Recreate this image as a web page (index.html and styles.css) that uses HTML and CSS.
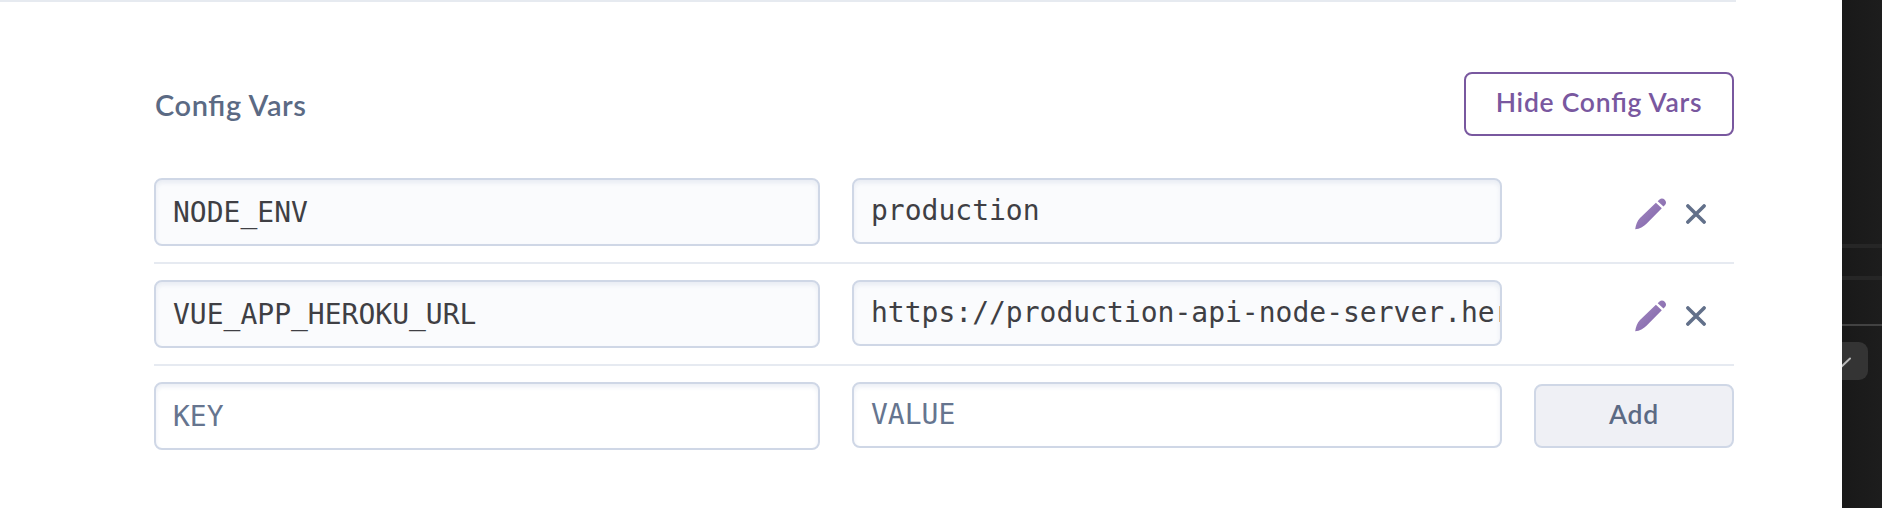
FILE: index.html
```html
<!DOCTYPE html>
<html lang="en">
<head>
<meta charset="utf-8">
<title>Config Vars</title>
<link rel="stylesheet" href="styles.css">
</head>
<body>
<svg class="defs" width="0" height="0" aria-hidden="true">
  <defs>
    <linearGradient id="violet" x1="0" y1="0" x2="1" y2="1">
      <stop offset="0" stop-color="#a78bc4"/>
      <stop offset="0.5" stop-color="#9176b5"/>
      <stop offset="1" stop-color="#7f5fa8"/>
    </linearGradient>
    <symbol id="pencil" viewBox="0 0 32 32">
      <path fill="url(#violet)" d="M0.2 31.2C0.8 26.6 2.3 22.8 5 20L20.9 4.7L26.8 10.2L11.5 25.7C8.4 28.8 4.8 30.8 0.2 31.2ZM22.7 3.2L24.5 1.4C26.2 0 28.3 0.3 29.7 1.8C31.2 3.3 31.5 5 30.2 6.7L28.5 8.5Z"/>
    </symbol>
    <symbol id="cross" viewBox="0 0 20 20">
      <path fill="none" stroke="#62708a" stroke-width="3.6" stroke-linecap="round" d="M1.9 1.9L18.1 18.1M18.1 1.9L1.9 18.1"/>
    </symbol>
  </defs>
</svg>
<div class="screen">
  <main class="page">
    <hr class="section-rule">
    <section class="config">
      <header class="config-header">
        <h2 class="title">Config Vars</h2>
        <button class="button button-outline">Hide Config Vars</button>
      </header>
      <div class="row">
        <div class="field key">NODE_ENV</div>
        <div class="field value">production</div>
        <div class="actions">
          <svg class="pencil"><use href="#pencil"/></svg>
          <svg class="cross"><use href="#cross"/></svg>
        </div>
      </div>
      <div class="row">
        <div class="field key">VUE_APP_HEROKU_URL</div>
        <div class="field value">https://production-api-node-server.her</div>
        <div class="actions">
          <svg class="pencil"><use href="#pencil"/></svg>
          <svg class="cross"><use href="#cross"/></svg>
        </div>
      </div>
      <div class="row row-new">
        <div class="field key empty">KEY</div>
        <div class="field value empty">VALUE</div>
        <button class="button button-add">Add</button>
      </div>
    </section>
  </main>
  <aside class="backdrop">
    <div class="band band-first"></div>
    <div class="band band-second"></div>
    <div class="band band-line"></div>
    <div class="chip">
      <svg class="check" viewBox="0 0 10 12"><path fill="none" stroke="#b9b9b9" stroke-width="2" stroke-linecap="round" d="M-2 11L8 1.5"/></svg>
    </div>
  </aside>
</div>
</body>
</html>
```
FILE: styles.css
```css
* {
  box-sizing: border-box;
}

body {
  margin: 0;
  background: #fff;
  font-family: Lato, "Open Sans", sans-serif;
  font-feature-settings: "liga" 1;
}

.defs {
  display: block;
}

.screen {
  display: flex;
  width: 1882px;
  height: 508px;
  overflow: hidden;
}

.page {
  width: 1842px;
  background: #fff;
}

.section-rule {
  width: 1736px;
  height: 2px;
  margin: 0;
  border: 0;
  background: #e6eaf0;
}

.config {
  width: 1580px;
  margin: 70px 0 0 154px;
}

.config-header {
  display: flex;
  justify-content: space-between;
  height: 106px;
}

.title {
  margin: 15px 0 0 1px;
  color: #5b6a84;
  font-size: 29px;
  font-weight: 600;
  letter-spacing: 0.6px;
  line-height: 36px;
}

.button {
  height: 64px;
  padding: 0 0 4px;
  border: 2px solid;
  border-radius: 8px;
  font-family: inherit;
  font-feature-settings: inherit;
  font-size: 26.5px;
  font-weight: 600;
  letter-spacing: 0.75px;
  line-height: 56px;
  text-align: center;
}

.button-outline {
  width: 270px;
  border-color: #79589f;
  background: #fff;
  color: #79589f;
}

.row {
  display: grid;
  grid-template-columns: 666px 650px 200px;
  column-gap: 32px;
  align-items: start;
  height: 86px;
  margin-bottom: 16px;
  border-bottom: 2px solid #e6eaf1;
}

.row-new {
  margin-bottom: 0;
  border-bottom: 0;
}

.field {
  height: 66px;
  padding: 0 0 0 17px;
  overflow: hidden;
  border: 2px solid #cfd7e6;
  border-radius: 8px;
  background: #fafbfd;
  box-shadow: inset 0 3px 4px rgba(207, 215, 230, 0.4);
  color: #3f3f44;
  font-family: "DejaVu Sans Mono", monospace;
  font-size: 28px;
  line-height: 62px;
  white-space: nowrap;
}

.key {
  height: 68px;
  line-height: 66px;
}

.empty {
  background: #fff;
  color: #66758f;
}

.actions {
  display: flex;
  align-items: center;
  gap: 19px;
  padding: 20px 0 0 101px;
}

.pencil {
  width: 32px;
  height: 32px;
}

.cross {
  width: 20px;
  height: 20px;
}

.button-add {
  margin-top: 2px;
  border-color: #cfd7e6;
  background: #eff0f5;
  color: #5b6a84;
}

.backdrop {
  display: flex;
  flex-direction: column;
  width: 40px;
  background: linear-gradient(90deg, #191919, #1d1d1d);
}

.band {
  height: 4px;
  background: #262626;
}

.band-first {
  margin-top: 244px;
}

.band-second {
  margin-top: 28px;
}

.band-line {
  height: 2px;
  margin-top: 44px;
  background: #424242;
}

.chip {
  width: 26px;
  height: 38px;
  margin-top: 16px;
  border-radius: 0 9px 9px 0;
  background: #343434;
}

.check {
  display: block;
  width: 10px;
  height: 12px;
  margin-top: 15px;
}

.chip::before {
  display: table;
  content: "";
}
```
